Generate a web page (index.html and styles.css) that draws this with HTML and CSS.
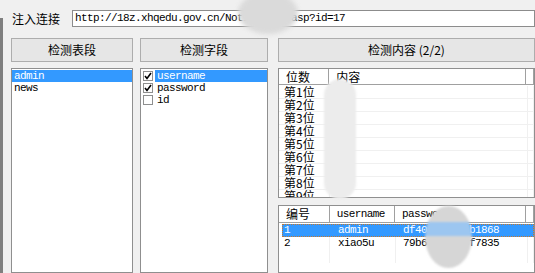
FILE: index.html
```html
<!DOCTYPE html>
<html lang="zh-CN">
<head>
    <meta charset="UTF-8">
    <title>注入检测</title>
    <link rel="stylesheet" href="styles.css">
</head>
<body>
    <div class="window">
        <div class="url-row">
            <span class="label">注入连接</span>
            <div class="url-box">http://18z.xhqedu.gov.cn/NoticeShow.asp?id=17</div>
        </div>

        <div class="panels">
            <div class="col col-tables">
                <div class="btn">检测表段</div>
                <ul class="listbox">
                    <li class="selected">admin</li>
                    <li>news</li>
                </ul>
            </div>

            <div class="col col-fields">
                <div class="btn">检测字段</div>
                <ul class="listbox checklist">
                    <li><span class="check"><svg width="8" height="8" viewBox="0 0 8 8"><path d="M1 4 L3 6.5 L7 1" fill="none" stroke="#000" stroke-width="1.6"/></svg></span><span class="text selected">username</span></li>
                    <li><span class="check"><svg width="8" height="8" viewBox="0 0 8 8"><path d="M1 4 L3 6.5 L7 1" fill="none" stroke="#000" stroke-width="1.6"/></svg></span><span class="text">password</span></li>
                    <li><span class="check"></span><span class="text">id</span></li>
                </ul>
            </div>

            <div class="col col-content">
                <div class="btn">检测内容 (2/2)</div>

                <div class="listview lv-digits">
                    <div class="lv-head">
                        <span class="c-pos">位数</span>
                        <span class="c-val">内容</span>
                        <span class="c-end"></span>
                    </div>
                    <div class="lv-body">
                        <div class="lv-row"><span class="c-pos">第1位</span><span class="c-val"></span><span class="c-end"></span></div>
                        <div class="lv-row"><span class="c-pos">第2位</span><span class="c-val"></span><span class="c-end"></span></div>
                        <div class="lv-row"><span class="c-pos">第3位</span><span class="c-val"></span><span class="c-end"></span></div>
                        <div class="lv-row"><span class="c-pos">第4位</span><span class="c-val"></span><span class="c-end"></span></div>
                        <div class="lv-row"><span class="c-pos">第5位</span><span class="c-val"></span><span class="c-end"></span></div>
                        <div class="lv-row"><span class="c-pos">第6位</span><span class="c-val"></span><span class="c-end"></span></div>
                        <div class="lv-row"><span class="c-pos">第7位</span><span class="c-val"></span><span class="c-end"></span></div>
                        <div class="lv-row"><span class="c-pos">第8位</span><span class="c-val"></span><span class="c-end"></span></div>
                        <div class="lv-row"><span class="c-pos">第9位</span><span class="c-val"></span><span class="c-end"></span></div>
                    </div>
                </div>

                <div class="listview lv-result">
                    <div class="lv-head">
                        <span class="c-id">编号</span>
                        <span class="c-user mono">username</span>
                        <span class="c-pass mono">password</span>
                        <span class="c-end"></span>
                    </div>
                    <div class="lv-body">
                        <div class="lv-row selected"><span class="c-id mono">1</span><span class="c-user mono">admin</span><span class="c-pass mono">df40a7c3e21b1868</span><span class="c-end"></span></div>
                        <div class="lv-row"><span class="c-id mono">2</span><span class="c-user mono">xiao5u</span><span class="c-pass mono">79b6e4a0c2bf7835</span><span class="c-end"></span></div>
                        <div class="lv-row"><span class="c-id"></span><span class="c-user"></span><span class="c-pass"></span><span class="c-end"></span></div>
                    </div>
                </div>
            </div>
        </div>

        <!-- privacy smudges over the screenshot -->
        <div class="smudge smudge-url"></div>
        <div class="smudge smudge-digits"></div>
        <div class="smudge smudge-pass"></div>
    </div>
</body>
</html>
```

FILE: styles.css
```css
body {
    margin: 0;
    padding: 0;
    background-color: #f0f0f0;
    font-family: "Noto Sans CJK SC", sans-serif;
    font-size: 12px;
    color: #000;
}

.window {
    position: relative;
    width: 535px;
    height: 273px;
    overflow: hidden;
    background-color: #f0f0f0;
}

.window::before {
    content: "";
    position: absolute;
    left: 0;
    top: 18px;
    bottom: 0;
    width: 3px;
    background-color: #7f7f7f;
}

.mono {
    font-family: "Liberation Mono", "Noto Sans CJK SC", monospace;
    font-size: 11px;
    letter-spacing: -0.6px;
}

/* url row */
.url-row {
    display: flex;
    align-items: center;
    padding: 10px 0 0 12px;
    height: 17px;
}

.label {
    width: 50px;
    margin-right: 10px;
    line-height: 17px;
}

.url-box {
    flex: 1;
    height: 15px;
    line-height: 15px;
    padding-left: 2px;
    border: 1px solid #8c8c8c;
    background-color: #fff;
    font-family: "Liberation Mono", monospace;
    font-size: 11px;
    letter-spacing: -0.6px;
    white-space: nowrap;
    overflow: hidden;
}

/* panels */
.panels {
    display: flex;
    margin-top: 11px;
    padding-left: 11px;
    height: 235px;
}

.col {
    display: flex;
    flex-direction: column;
}

.col-tables {
    width: 122px;
    margin-right: 7px;
}

.col-fields {
    width: 128px;
    margin-right: 10px;
}

.col-content {
    width: 257px;
}

.btn {
    height: 22px;
    line-height: 22px;
    text-align: center;
    border: 1px solid #adadad;
    background-color: #e6e6e6;
    margin-bottom: 6px;
    flex-shrink: 0;
}

.listbox {
    flex: 1;
    list-style: none;
    margin: 0;
    padding: 1px 0 0 0;
    border: 1px solid #8f8f8f;
    background-color: #fff;
    font-family: "Liberation Mono", monospace;
    font-size: 11px;
    letter-spacing: -0.6px;
}

.listbox li {
    height: 12px;
    line-height: 12px;
    padding-left: 2px;
}

.listbox li.selected {
    background-color: #3399ff;
    color: #fff;
}

.checklist li {
    display: flex;
    align-items: center;
    padding-left: 2px;
}

.check {
    width: 8px;
    height: 8px;
    border: 1px solid #8e8f8f;
    background-color: #fff;
    margin-right: 2px;
    display: flex;
}

.checklist .text {
    flex: 1;
    height: 12px;
    padding-left: 2px;
}

.checklist .text.selected {
    background-color: #3399ff;
    color: #fff;
}

/* list views */
.listview {
    border: 1px solid #8f8f8f;
    background-color: #fff;
    overflow: hidden;
}

.lv-digits {
    height: 128px;
    margin-bottom: 7px;
}

.lv-result {
    flex: 1;
}

.lv-head {
    display: flex;
    height: 15px;
    line-height: 15px;
    border-bottom: 1px solid #a0a0a0;
    background-color: #fff;
}

.lv-result .lv-head {
    height: 16px;
    line-height: 16px;
}

.lv-head span {
    border-right: 1px solid #a0a0a0;
    padding-left: 7px;
    box-sizing: border-box;
    white-space: nowrap;
}

.lv-body {
    padding-top: 1px;
}

.lv-row {
    display: flex;
    height: 13px;
    line-height: 13px;
}

.lv-digits .lv-row {
    border-bottom: 1px solid #f0f0f0;
    height: 12px;
    line-height: 12px;
}

.lv-row span {
    border-right: 1px solid #f0f0f0;
    padding-left: 5px;
    box-sizing: border-box;
    white-space: nowrap;
}

.lv-result .lv-row span {
    overflow: hidden;
}

.lv-row.selected {
    background-color: #3399ff;
    color: #fff;
    outline: 1px dotted #c8782c;
    outline-offset: -1px;
    margin-left: 3px;
}

.lv-row.selected span {
    border-right-color: #3399ff;
}

.lv-row.selected .c-id {
    width: 48px;
    padding-left: 2px;
}

.c-pos { width: 51px; }
.c-val { width: 200px; }
.c-id { width: 51px; }
.c-user { width: 66px; }
.c-pass { width: 132px; }
.c-end { flex: 1; }

.lv-row .c-user { padding-left: 8px; }
.lv-row .c-pass { padding-left: 7px; }

/* smudges */
.smudge {
    position: absolute;
}

.smudge-url {
    left: 238px;
    top: -8px;
    width: 60px;
    height: 42px;
    border-radius: 50%;
    background-color: #dadada;
    filter: blur(2px);
}

.smudge-digits {
    left: 324px;
    top: 79px;
    width: 32px;
    height: 120px;
    border-radius: 16px;
    background-color: #ececec;
    filter: blur(1px);
}

.smudge-pass {
    left: 425px;
    top: 206px;
    width: 47px;
    height: 62px;
    border-radius: 50%;
    background: linear-gradient(to bottom, #d6d6d6 0, #d6d6d6 16px, #9cc6f0 16px, #9cc6f0 30px, #d6d6d6 30px);
    filter: blur(1px);
}
```
